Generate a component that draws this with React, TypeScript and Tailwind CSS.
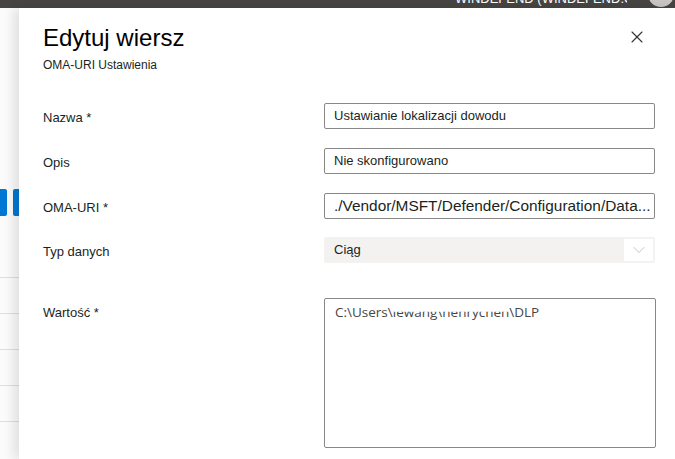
import { X, ChevronDown } from 'lucide-react';

const Field = ({ label, children, className = '' }: { label: string; children: React.ReactNode; className?: string }) => (
  <div className={`flex items-start ${className}`}>
    <div className="h-[26px] w-[281px] shrink-0 pt-[3px] text-[13px] leading-[23px] text-[#201f1e]">{label}</div>
    {children}
  </div>
);

const TextBox = ({ value, size = 'text-[13px]' }: { value: string; size?: string }) => (
  <div
    className={`flex h-[26px] w-[331px] items-center overflow-hidden whitespace-nowrap rounded-[2px] border border-[#8a8886] px-[9px] ${size} text-[#201f1e]`}
  >
    {value}
  </div>
);

export default function App() {
  return (
    <div className="h-[459px] w-[675px] overflow-hidden bg-white font-['Liberation_Sans',Arial,sans-serif]">
      {/* top bar, mostly scrolled off */}
      <div className="flex h-[8px] items-end overflow-hidden bg-[#464544]">
        <div className="mb-[2px] ml-[455px] w-[172px] overflow-hidden whitespace-nowrap text-[13px] leading-[14px] text-white">
          WINDEFEND (WINDEFEND.ONMICR...
        </div>
        <div className="mb-[1px] ml-[21px] h-[26px] w-[26px] shrink-0 rounded-full bg-[#c8c6c4]" />
      </div>

      <div className="flex">
        {/* background page peeking out on the left */}
        <div className="flex w-[19px] shrink-0 flex-col bg-[#fbfbfb]">
          <div className="h-[181px]" />
          <div className="flex h-[27px] gap-[6px]">
            <div className="w-[7px] rounded-r-[2px] bg-[#0078d4]" />
            <div className="w-[6px] rounded-l-[2px] bg-[#0078d4]" />
          </div>
          <div className="h-[62px] border-b border-[#e1dfdd]" />
          <div className="h-[36px] border-b border-[#e1dfdd]" />
          <div className="h-[36px] border-b border-[#e1dfdd]" />
          <div className="h-[36px] border-b border-[#e1dfdd]" />
          <div className="h-[36px] border-b border-[#e1dfdd]" />
        </div>

        {/* panel */}
        <div className="relative flex h-[451px] flex-1 flex-col bg-white pl-[24px] pr-[20px] shadow-[-6px_0_10px_rgba(0,0,0,0.10)]">
          <div className="flex items-start justify-between pt-[14px]">
            <h1 className="text-[24px] leading-[32px] text-[#000000]">Edytuj wiersz</h1>
            <button className="mr-[9px] mt-[5px] text-[#323130]">
              <X className="h-[20px] w-[20px]" strokeWidth={1.3} />
            </button>
          </div>
          <div className="mt-[3px] text-[12px] leading-[16px] text-[#201f1e]">OMA-URI Ustawienia</div>

          <div className="mt-[30px] flex flex-col">
            <Field label="Nazwa *">
              <TextBox value="Ustawianie lokalizacji dowodu" />
            </Field>
            <Field label="Opis" className="mt-[19px]">
              <TextBox value="Nie skonfigurowano" />
            </Field>
            <Field label="OMA-URI *" className="mt-[19px]">
              <TextBox value="./Vendor/MSFT/Defender/Configuration/Data..." size="text-[15.4px]" />
            </Field>
            <Field label="Typ danych" className="mt-[18px]">
              <div className="flex h-[26px] w-[331px] items-center justify-between rounded-[2px] bg-[#f3f2f1] pl-[10px] pr-[2px] text-[13px] text-[#201f1e]">
                <span>Ciąg</span>
                <span className="flex h-[22px] w-[29px] items-center justify-center bg-white text-[#b3b0ad]">
                  <ChevronDown className="h-[20px] w-[26px]" strokeWidth={0.9} />
                </span>
              </div>
            </Field>
            <Field label="Wartość *" className="mt-[35px]">
              <div className="h-[150px] w-[332px] rounded-[2px] border border-[#8a8886] px-[10px] pt-[4px] font-['Open_Sans',sans-serif] text-[13.5px] leading-[18px] text-[#484644]">
                C:\Users\
                <span className="inline-block [clip-path:inset(48%_0_0_0)]">lewang\henrychen</span>
                \DLP
              </div>
            </Field>
          </div>
        </div>
      </div>
    </div>
  );
}
